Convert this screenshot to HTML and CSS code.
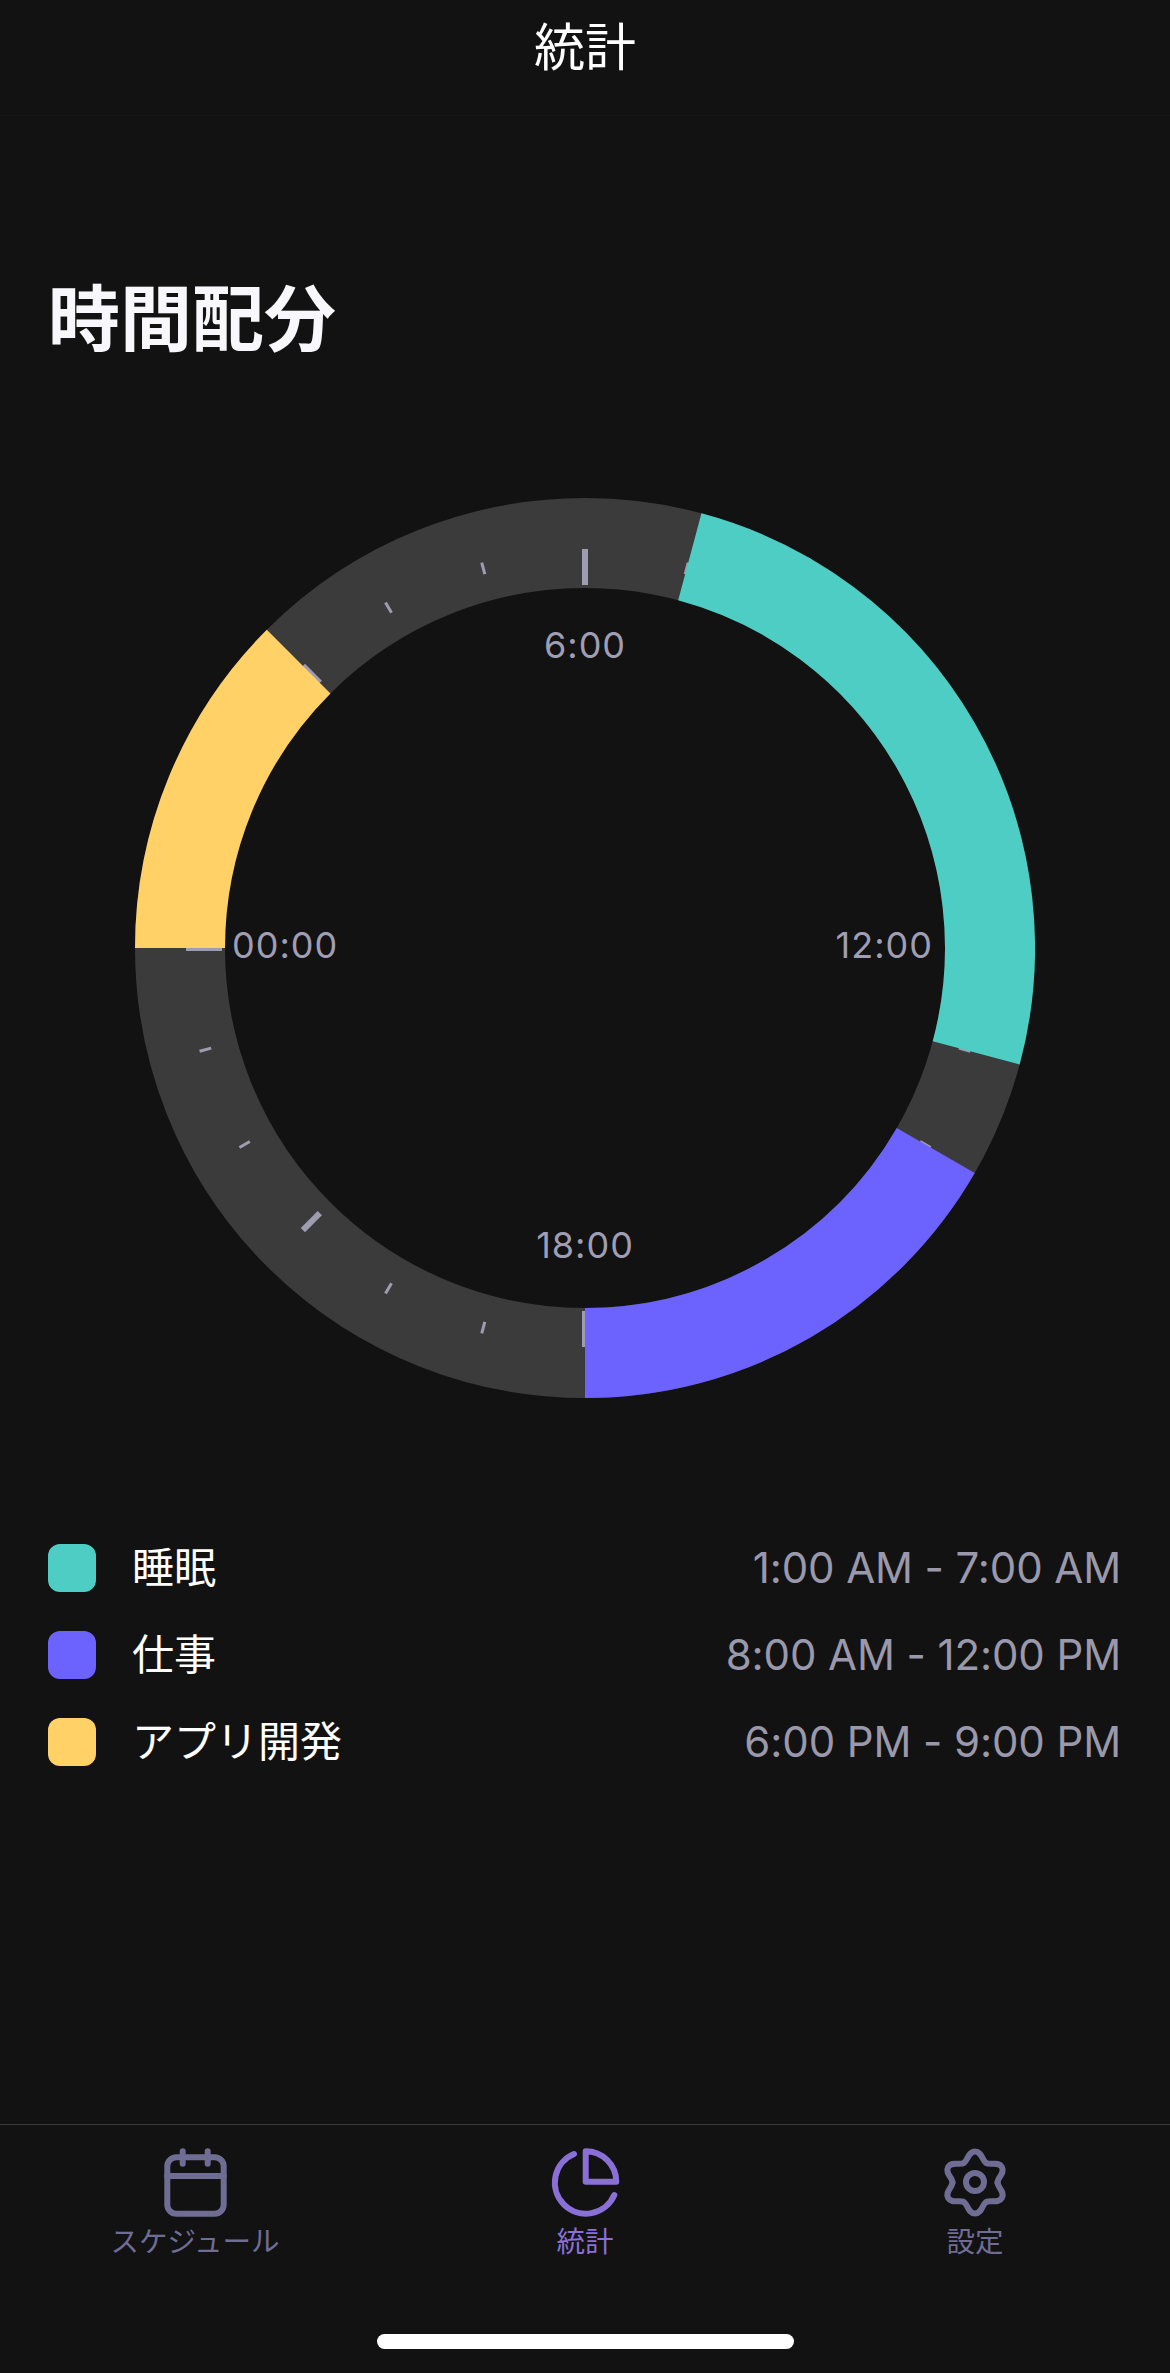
FILE: index.html
```html
<!DOCTYPE html>
<html lang="ja">
<head>
<meta charset="utf-8">
<title>統計</title>
<link rel="stylesheet" href="styles.css">
</head>
<body>
<div class="app">
  <header class="topbar"><h1 class="topbar-title">統計</h1></header>
  <main class="content">
    <h2 class="heading">時間配分</h2>
    <div class="chart-wrap">
      <svg class="chart" width="900" height="900" viewBox="0 0 900 900">
        <defs>
          <line id="tk" class="tick-minor" x1="450" y1="51" x2="450" y2="63"/>
          <line id="tm" class="tick-major" x1="450" y1="51" x2="450" y2="75"/>
          <line id="tj" class="tick-major" x1="450" y1="51" x2="450" y2="87"/>
        </defs>
        <circle class="track" cx="450" cy="450" r="405"/>
        <use href="#tj"/>
        <use href="#tk" transform="rotate(15 450 450)"/>
        <use href="#tk" transform="rotate(30 450 450)"/>
        <use href="#tm" transform="rotate(45 450 450)"/>
        <use href="#tk" transform="rotate(60 450 450)"/>
        <use href="#tk" transform="rotate(75 450 450)"/>
        <use href="#tj" transform="rotate(90 450 450)"/>
        <use href="#tk" transform="rotate(105 450 450)"/>
        <use href="#tk" transform="rotate(120 450 450)"/>
        <use href="#tm" transform="rotate(135 450 450)"/>
        <use href="#tk" transform="rotate(150 450 450)"/>
        <use href="#tk" transform="rotate(165 450 450)"/>
        <use href="#tj" transform="rotate(180 450 450)"/>
        <use href="#tk" transform="rotate(195 450 450)"/>
        <use href="#tk" transform="rotate(210 450 450)"/>
        <use href="#tm" transform="rotate(225 450 450)"/>
        <use href="#tk" transform="rotate(240 450 450)"/>
        <use href="#tk" transform="rotate(255 450 450)"/>
        <use href="#tj" transform="rotate(270 450 450)"/>
        <use href="#tk" transform="rotate(285 450 450)"/>
        <use href="#tk" transform="rotate(300 450 450)"/>
        <use href="#tm" transform="rotate(315 450 450)"/>
        <use href="#tk" transform="rotate(330 450 450)"/>
        <use href="#tk" transform="rotate(345 450 450)"/>
        <path class="seg seg-sleep" d="M554.82 58.8A405 405 0 0 1 841.2 554.82"/>
        <path class="seg seg-work" d="M800.74 652.5A405 405 0 0 1 450 855"/>
        <path class="seg seg-dev" d="M45 450A405 405 0 0 1 163.62 163.62"/>
        <text class="hour" x="450" y="160" text-anchor="middle">6:00</text>
        <text class="hour" x="798" y="460" text-anchor="end">12:00</text>
        <text class="hour" x="450" y="760" text-anchor="middle">18:00</text>
        <text class="hour" x="97" y="460">00:00</text>
      </svg>
    </div>
    <ul class="legend">
      <li class="legend-row"><span class="swatch swatch-sleep"></span><span class="legend-name">睡眠</span><span class="legend-time">1:00 AM - 7:00 AM</span></li>
      <li class="legend-row"><span class="swatch swatch-work"></span><span class="legend-name">仕事</span><span class="legend-time">8:00 AM - 12:00 PM</span></li>
      <li class="legend-row"><span class="swatch swatch-dev"></span><span class="legend-name">アプリ開発</span><span class="legend-time">6:00 PM - 9:00 PM</span></li>
    </ul>
  </main>
  <nav class="tabbar">
    <a class="tab">
      <svg class="tab-icon" width="72" height="72" viewBox="0 0 72 72">
        <rect x="8.3" y="11.3" width="56.4" height="56.4" rx="9"/>
        <path d="M8.3 30H64.7M23.7 5.3V17.7M48.7 5.3V17.7"/>
      </svg>
      <span class="tab-label">スケジュール</span>
    </a>
    <a class="tab tab-active">
      <svg class="tab-icon" width="72" height="72" viewBox="0 0 72 72">
        <path d="M25 8A31 31 0 1 0 65.3 49"/>
        <path d="M36.7 5.3A30.6 30.6 0 0 1 67.3 35.7H36.7Z"/>
      </svg>
      <span class="tab-label">統計</span>
    </a>
    <a class="tab">
      <svg class="tab-icon" width="72" height="72" viewBox="-36 -36.5 72 72">
        <defs><path id="lobe" d="M-11.25 -19.5C-6.9 -22 -7 -31 0 -31C7 -31 6.9 -22 11.25 -19.5"/></defs>
        <use href="#lobe"/>
        <use href="#lobe" transform="rotate(60)"/>
        <use href="#lobe" transform="rotate(120)"/>
        <use href="#lobe" transform="rotate(180)"/>
        <use href="#lobe" transform="rotate(240)"/>
        <use href="#lobe" transform="rotate(300)"/>
        <circle cx="0" cy="-0.5" r="9"/>
      </svg>
      <span class="tab-label">設定</span>
    </a>
  </nav>
  <div class="home-area"><span class="home-bar"></span></div>
</div>
</body>
</html>
```
FILE: styles.css
```css
* { box-sizing: border-box; }
html, body { margin: 0; padding: 0; background: #121212; }
body { font-family: Inter, "Noto Sans CJK JP", sans-serif; color: #f8f7fb; }
.app { width: 1170px; height: 2373px; display: flex; flex-direction: column; background: #121212; }

.topbar { height: 116px; flex: none; border-bottom: 1px solid #161616; display: flex; justify-content: center; padding-top: 13px; }
.topbar-title { margin: 0; font-size: 51px; line-height: 70px; font-weight: 400; color: #fff; }

.content { flex: 1; padding: 0 48px; display: flex; flex-direction: column; }
.heading { margin: 158px 0 0; font-size: 72px; line-height: 90px; font-weight: 700; color: #f8f7fb; }

.chart-wrap { margin-top: 134px; display: flex; justify-content: center; }
.chart { display: block; }
.track { fill: none; stroke: #3b3b3b; stroke-width: 90; }
.tick-minor { stroke: #9e9cb0; stroke-width: 3; }
.tick-major { stroke: #9e9cb0; stroke-width: 6; }
.seg { fill: none; stroke-width: 90; }
.seg-sleep { stroke: #4ecdc4; }
.seg-work { stroke: #6c63ff; }
.seg-dev { stroke: #ffd166; }
.hour { font-family: Inter, sans-serif; font-size: 36px; letter-spacing: 1px; fill: #a09eb2; }

.legend { list-style: none; margin: 146px 0 0; padding: 0; display: flex; flex-direction: column; gap: 39px; }
.legend-row { display: flex; align-items: center; height: 48px; }
.swatch { width: 48px; height: 48px; border-radius: 12px; flex: none; }
.swatch-sleep { background: #4ecdc4; }
.swatch-work { background: #6c63ff; }
.swatch-dev { background: #ffd166; }
.legend-name { margin-left: 36px; padding-bottom: 8px; font-size: 42px; color: #fff; }
.legend-time { margin-left: auto; margin-right: 1px; padding-bottom: 2px; font-size: 42px; letter-spacing: -0.1px; color: #9a98ab; }

.tabbar { flex: none; height: 112px; border-top: 1px solid #3a3a3a; margin-top: auto; display: grid; grid-template-columns: repeat(3, 1fr); padding-top: 21px; }
.tab { display: flex; flex-direction: column; align-items: center; color: #6f6d94; }
.tab-active { color: #8a70d6; }
.tab-icon { display: block; fill: none; stroke: currentColor; stroke-width: 6; stroke-linecap: round; stroke-linejoin: round; }
.tab-label { font-size: 28.5px; line-height: 40px; margin-top: 4px; }

.home-area { flex: none; height: 137px; display: flex; justify-content: center; align-items: flex-end; padding-bottom: 24px; }
.home-bar { width: 417px; height: 15px; border-radius: 8px; background: #fff; }
```
